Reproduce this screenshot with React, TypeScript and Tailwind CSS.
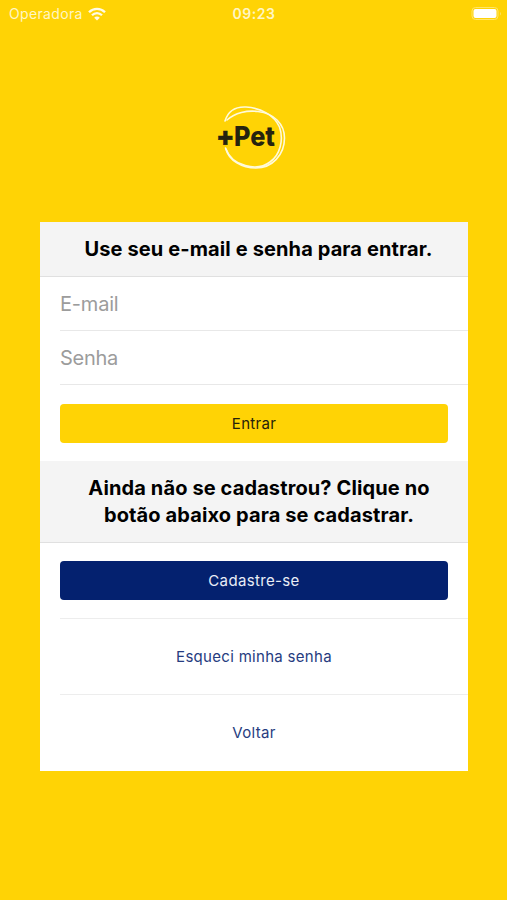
import { useState } from "react";

const SECTION_TITLE =
  "border-b border-[#e0e0e0] bg-[#f4f4f4] text-center text-[20px] font-bold tracking-[0.12px] text-black";

function StatusBar() {
  return (
    <header className="grid h-7 grid-cols-3 items-center pr-1 pl-[9px] text-sm text-[#fff6c4]">
      <div className="flex items-center gap-[5px]">
        <span className="tracking-[0.35px]">Operadora</span>
        <svg width="18" height="14" viewBox="0 0 18 14" fill="none" stroke="#fffbe6" strokeWidth="2.3">
          <path d="M1 5.2C5.5 .7 12.5 .7 17 5.2" />
          <path d="M4 8.3c2.9-2.9 7.1-2.9 10 0" />
          <path d="M9 13.5 6.2 10.7c1.6-1.5 4-1.5 5.6 0z" fill="#fffbe6" stroke="none" />
        </svg>
      </div>
      <span className="pr-1 text-center font-semibold tracking-[0.5px]">09:23</span>
      <svg className="justify-self-end" width="32" height="14" viewBox="0 0 32 14">
        <rect x="1" y="0.5" width="26" height="12" rx="3.5" fill="none" stroke="#ffe568" />
        <rect x="2.5" y="2" width="23" height="9" rx="2" fill="#fff" />
        <path d="M29 5v3.6c1.2-.6 1.2-3 0-3.6z" fill="#ffe568" />
      </svg>
    </header>
  );
}

function Logo() {
  return (
    <svg width="95" height="85" viewBox="0 0 95 85" role="img" aria-label="+Pet">
      <g fill="none" stroke="#fffadb" strokeWidth="1.6" strokeLinecap="round">
        <path d="M20 26C23 16 31 11.5 41 12C56 13 69 20 74.5 32C79 45 75 60 65 67C52 77 27 71 21 54" />
        <path d="M22 25C30 18 42 15 53 16.500C69 18.500 79.500 29 79.500 43C79.500 60 67 73 51 73C37 73 24 66 20.500 53" />
      </g>
      <g fill="#25230f" fontFamily="Inter, sans-serif" fontWeight="800">
        <text x="11" y="51" fontSize="27" stroke="#25230f" strokeWidth="0.5">+</text>
        <text x="29" y="51" fontSize="27" textLength="41" lengthAdjust="spacingAndGlyphs">Pet</text>
      </g>
    </svg>
  );
}

export default function App() {
  const [email, setEmail] = useState("");
  const [password, setPassword] = useState("");

  return (
    <div className="flex min-h-[900px] w-full flex-col bg-[#ffd305] font-['Inter',sans-serif]">
      <StatusBar />

      <div className="mt-[67px] flex justify-center pr-[2px]">
        <Logo />
      </div>

      <main className="mt-[42px] mr-[39px] ml-10 flex flex-col bg-white">
        <h1 className={`h-[55px] pt-3 pl-[9px] leading-[30px] ${SECTION_TITLE}`}>
          Use seu e-mail e senha para entrar.
        </h1>

        <form className="flex flex-col pl-5" onSubmit={(event) => event.preventDefault()}>
          <input
            type="email"
            placeholder="E-mail"
            value={email}
            onChange={(event) => setEmail(event.target.value)}
            className="h-[54px] border-b border-[#e8e8e8] text-[20px] tracking-[-0.2px] outline-none placeholder:text-[#9c9c9c]"
          />
          <input
            type="password"
            placeholder="Senha"
            value={password}
            onChange={(event) => setPassword(event.target.value)}
            className="h-[54px] border-b border-[#e8e8e8] text-[20px] tracking-[-0.3px] outline-none placeholder:text-[#9c9c9c]"
          />
          <button
            type="submit"
            className="mt-[19px] mr-5 mb-[18px] h-[39px] rounded bg-[#ffd305] pt-px text-[15px] tracking-[0.3px] text-[#26220a]"
          >
            Entrar
          </button>
        </form>

        <h2 className={`h-[82px] pt-[14px] pl-[10px] leading-[27px] ${SECTION_TITLE}`}>
          Ainda não se cadastrou? Clique no
          <br />
          botão abaixo para se cadastrar.
        </h2>

        <div className="flex flex-col pl-5">
          <div className="flex h-[76px] border-b border-[#ededed] pt-[18px] pr-5">
            <button type="button" className="h-[39px] flex-1 rounded bg-[#04216f] pt-[2px] text-[15px] tracking-[0.35px] text-[#e9edf6]">
              Cadastre-se
            </button>
          </div>
          <button type="button" className="h-[76px] border-b border-[#ededed] pt-[2px] pr-5 text-[15px] tracking-[0.3px] text-[#263c80]">
            Esqueci minha senha
          </button>
          <button type="button" className="h-[76px] pt-px pr-5 text-[15px] tracking-[0.3px] text-[#263c80]">
            Voltar
          </button>
        </div>
      </main>
    </div>
  );
}
